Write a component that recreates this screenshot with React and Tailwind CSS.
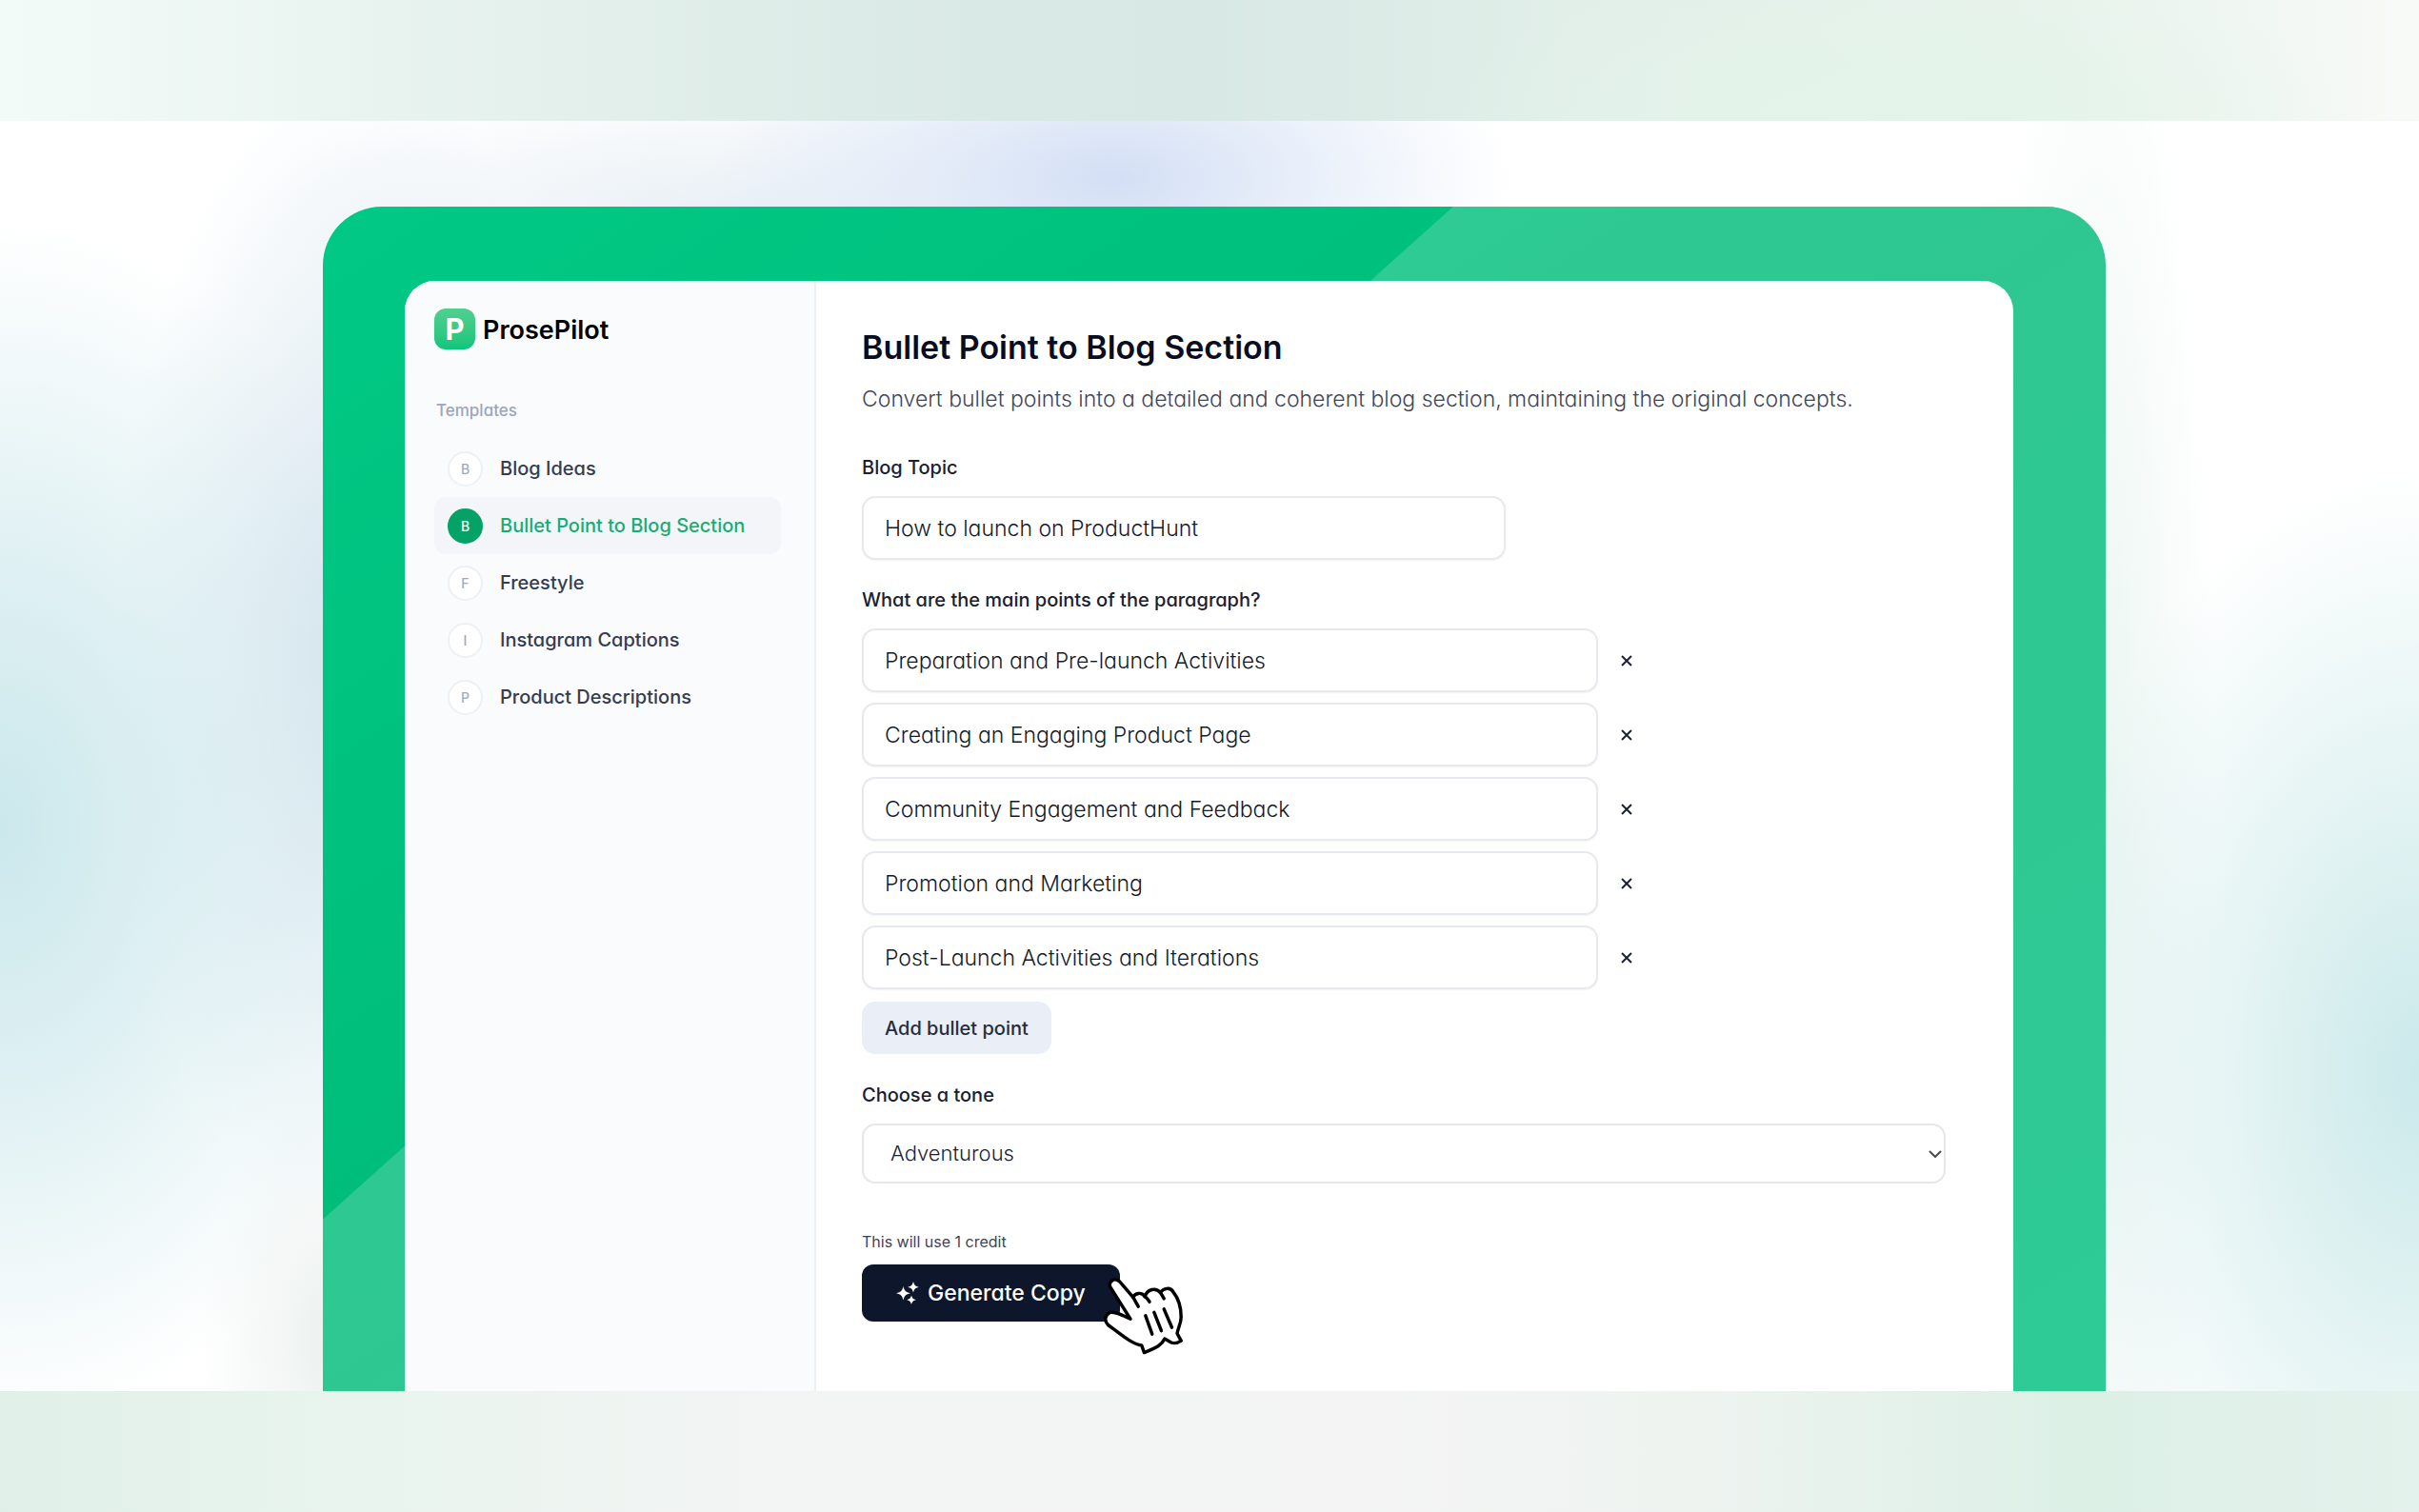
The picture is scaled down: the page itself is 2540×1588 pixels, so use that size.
import React, { useState } from "react";

const templates = [
  { name: "Blog Ideas" },
  { name: "Bullet Point to Blog Section", active: true },
  { name: "Freestyle" },
  { name: "Instagram Captions" },
  { name: "Product Descriptions" },
];

const initialPoints = [
  "Preparation and Pre-launch Activities",
  "Creating an Engaging Product Page",
  "Community Engagement and Feedback",
  "Promotion and Marketing",
  "Post-Launch Activities and Iterations",
];

const fieldClass =
  "h-[67px] w-full rounded-[14px] border-2 border-[#e6e9ee] bg-white px-[22px] text-[23px] font-light text-[#141a2b] shadow-xs outline-none";
const labelClass = "block text-[20px] leading-6 font-medium text-[#1a2030]";

function Logo() {
  return (
    <span className="flex size-[43px] items-center justify-center rounded-[12px] bg-linear-to-b from-[#4fd08f] to-[#0ac57c] text-[31px] leading-none font-bold text-white">
      P
    </span>
  );
}

function Sparkles() {
  return (
    <svg viewBox="0 0 24 24" className="size-6 fill-white" aria-hidden="true">
      <path d="M7.500 5C8.800 9.800 10 11 15 12.200 10 13.500 8.800 14.700 7.500 19.500 6.200 14.700 5 13.500 0 12.200 5 11 6.200 9.800 7.500 5Z" />
      <path d="M18 0c1 3.800 2 4.800 6 5.800-4 1-5 2-6 5.800-1-3.800-2-4.800-6-5.800 4-1 5-2 6-5.800Z" />
      <path d="M16 14.500c.9 3 1.700 3.800 4.800 4.700-3.100.9-3.900 1.700-4.800 4.700-.9-3-1.700-3.800-4.800-4.700 3.100-.9 3.900-1.700 4.800-4.700Z" />
    </svg>
  );
}

function HandCursor() {
  return (
    <svg
      viewBox="0 0 250 240"
      className="pointer-events-none absolute top-[13px] left-[254px] h-[83px] w-[87px]"
      aria-hidden="true"
    >
      <path
        d="M24 12C34 4 46 10 54 22L88 62C94 50 114 44 124 60C132 36 158 32 171 48C180 34 202 30 210 46C226 66 234 96 234 122C234 142 224 156 222 172L234 194C220 204 206 202 198 196L184 188C176 206 160 216 122 230L114 208C84 204 50 174 12 146C0 134 2 116 18 108C40 106 52 116 80 128L22 36C14 26 16 18 24 12Z"
        fill="#fff"
        stroke="#000"
        strokeWidth="10"
        strokeLinejoin="round"
      />
      <path
        d="M88 62L104 90M124 60C131 64 134 70 138 76M171 48C176 54 178 60 182 66M126 118L146 174M152 108L174 164M182 98L206 154"
        fill="none"
        stroke="#000"
        strokeWidth="10"
        strokeLinecap="round"
      />
    </svg>
  );
}

function Sidebar() {
  return (
    <aside className="w-[432px] shrink-0 border-r-2 border-[#eef0f3] bg-[#fafbfd] pt-[29px] pr-[35px] pl-[31px]">
      <a href="#home" className="flex items-center gap-2">
        <Logo />
        <span className="pt-[2px] text-[27px] leading-8 font-semibold text-black">ProsePilot</span>
      </a>
      <h2 className="mt-[52px] ml-[2px] text-[17px] leading-6 font-medium text-[#9aa5c0]">Templates</h2>
      <nav className="mt-[19px]" aria-label="Templates">
        {templates.map((t) => (
          <a
            key={t.name}
            href="#template"
            className={
              "flex h-[60px] items-center gap-[18px] rounded-[12px] px-[14px] text-[20px] font-medium " +
              (t.active ? "bg-[#f3f5f9] text-[#18ad74]" : "text-[#353c50]")
            }
          >
            <span
              className={
                "flex size-[37px] shrink-0 items-center justify-center rounded-full border-2 text-[14px] " +
                (t.active ? "border-[#05a268] bg-[#05a268] text-white" : "border-[#eff0f3] bg-white text-[#a3a9b5]")
              }
            >
              {t.name[0]}
            </span>
            <span className="whitespace-nowrap">{t.name}</span>
          </a>
        ))}
      </nav>
    </aside>
  );
}

function Form() {
  const [points, setPoints] = useState(initialPoints);
  return (
    <form
      className="flex-1 pt-[50px] pr-[71px] pb-[72px] pl-[48px]"
      onSubmit={(e) => e.preventDefault()}
    >
      <h1 className="text-[34px] leading-10 font-semibold text-[#0a0d1f]">Bullet Point to Blog Section</h1>
      <p className="mt-[18px] text-[23px] leading-8 font-light text-[#3f4658]">
        Convert bullet points into a detailed and coherent blog section, maintaining the original concepts.
      </p>

      <div className="mt-11 max-w-[676px]">
        <label htmlFor="topic" className={labelClass}>Blog Topic</label>
        <input id="topic" defaultValue="How to launch on ProductHunt" className={fieldClass + " mt-[18px]"} />
      </div>

      <fieldset className="mt-[30px]">
        <legend className={labelClass}>What are the main points of the paragraph?</legend>
        <div className="mt-[18px] flex flex-col gap-[11px]">
          {points.map((p, i) => (
            <div key={p} className="flex items-center gap-6">
              <div className="w-full max-w-[773px]">
                <input aria-label={"Point " + (i + 1)} defaultValue={p} className={fieldClass} />
              </div>
              <button
                type="button"
                aria-label={"Remove " + p}
                onClick={() => setPoints(points.filter((x) => x !== p))}
              >
                <svg viewBox="0 0 12 12" className="size-3 stroke-[#1c2233] stroke-2" aria-hidden="true">
                  <path d="M1 1l10 10M11 1L1 11" />
                </svg>
              </button>
            </div>
          ))}
        </div>
        <button
          type="button"
          className="mt-[13px] h-[55px] rounded-[14px] bg-[#eaeef6] px-6 text-[20px] font-medium text-[#262c3c]"
        >
          Add bullet point
        </button>
      </fieldset>

      <div className="mt-[31px]">
        <label htmlFor="tone" className={labelClass}>Choose a tone</label>
        <div className="relative mt-[18px]">
          <select
            id="tone"
            className="h-[63px] w-full appearance-none rounded-[14px] border-2 border-[#e4e7ee] bg-white px-7 text-[22px] font-light text-[#1c2233] outline-none"
          >
            <option>Adventurous</option>
          </select>
          <svg
            viewBox="0 0 14 8"
            className="pointer-events-none absolute top-[28px] right-[4px] h-2 w-[14px] fill-none stroke-[#4b4b50] stroke-2"
            aria-hidden="true"
          >
            <path d="M1 1l6 6 6-6" />
          </svg>
        </div>
      </div>

      <p className="mt-[51px] text-[16px] leading-5 text-[#3f4454]">This will use 1 credit</p>
      <div className="relative mt-[14px]">
        <button
          type="submit"
          className="flex h-[60px] items-center gap-[9px] rounded-[12px] bg-[#0e162b] px-9 text-[23px] font-medium text-white"
        >
          <Sparkles />
          Generate Copy
        </button>
        <HandCursor />
      </div>
    </form>
  );
}

export default function App() {
  return (
    <div className="flex min-h-screen flex-col font-[Inter,sans-serif] [font-feature-settings:'cv11']">
      <div className="h-[127px] bg-[radial-gradient(ellipse_500px_160px_at_1980px_127px,#e3f4e9,transparent),linear-gradient(90deg,#f3fbf8_0%,#e8f3ef_16%,#d9e9e5_40%,#d8e8e5_50%,#e2efe9_66%,#e8f3ec_85%,#f8faf8_100%)]" />
      <main className="flex flex-1 flex-col overflow-hidden bg-white bg-[radial-gradient(ellipse_420px_200px_at_1170px_60px,#d3dff5,#d8e3f699_45%,transparent),radial-gradient(ellipse_480px_150px_at_760px_100px,#e8eff5,transparent),radial-gradient(ellipse_440px_640px_at_0px_740px,#cbe8ec,#cfe9edb3_40%,transparent),radial-gradient(ellipse_400px_640px_at_2540px_1000px,#cbe9eb,#d3ececb3_40%,transparent),radial-gradient(ellipse_260px_620px_at_380px_560px,#d3e2ec,#dbe8f099_50%,transparent),radial-gradient(ellipse_140px_260px_at_350px_1280px,#ebf1ef,transparent),radial-gradient(ellipse_130px_1000px_at_2200px_780px,#e9f5f1,transparent)] pt-[90px] pr-[329px] pl-[339px]">
        <div className="relative flex flex-1 flex-col overflow-hidden rounded-t-[62px] bg-linear-to-br from-[#00c985] via-[#00bb79] to-[#00c080]">
          <div className="absolute inset-0 bg-white/18 [clip-path:polygon(63.4%_0,100%_0,100%_100%,0_100%,0_85.5%)]" />
          <div className="relative mt-[78px] mr-[97px] ml-[86px] flex flex-1 overflow-hidden rounded-t-[32px] bg-white">
            <Sidebar />
            <Form />
          </div>
        </div>
      </main>
      <div className="h-[127px] bg-[linear-gradient(90deg,#e0f0e8_0%,#e9f4ee_15%,#f3f4f4_32%,#f4f4f4_55%,#eef3f0_70%,#dcf0e6_86%,#e4f1ec_100%)]" />
    </div>
  );
}
